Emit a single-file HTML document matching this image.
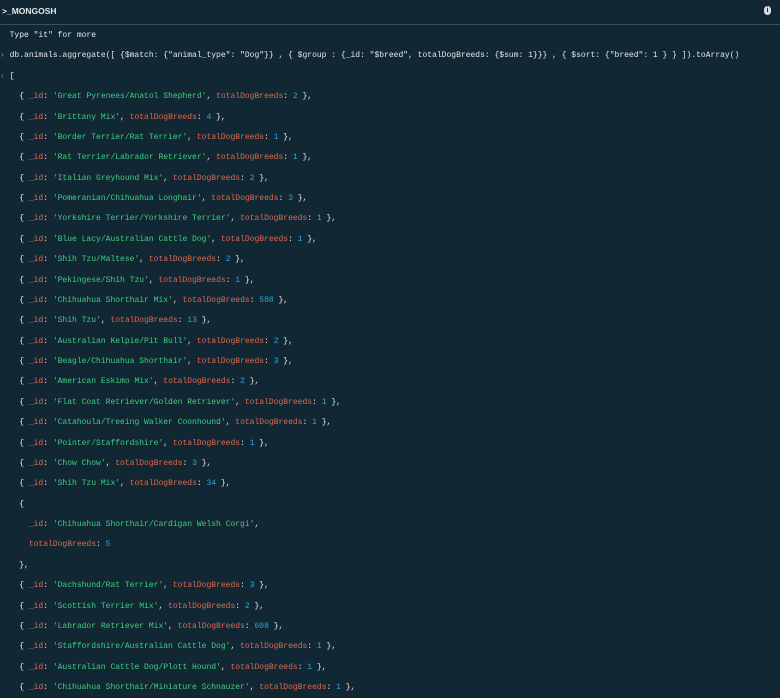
<!DOCTYPE html>
<html><head><meta charset="utf-8"><style>
body{margin:0;width:780px;height:693px;background:#112733;overflow:hidden;font-family:"Liberation Mono",monospace;font-size:8px;color:#e3e8ea}
.hd{position:absolute;left:0;top:0;width:780px;height:24px;border-bottom:1px solid #3a4d58;font-family:"Liberation Sans",sans-serif;font-size:8.5px;font-weight:bold;color:#e3e8ea}
.hd span{position:absolute;left:2px;top:6px}
.info{position:absolute;right:9px;top:6px;width:7px;height:9px;border-radius:4px;background:#d8dde0;color:#112733;font-size:7px;text-align:center;line-height:9px}
.c{position:absolute;left:0;top:26px;width:780px}
.l{height:20.38px;line-height:20.38px;white-space:pre}
.g{color:#3fcf80}.r{color:#e0674f}.b{color:#2fa6e6}.p{color:#8a979e}
</style></head><body>
<div class="hd"><span>&gt;_MONGOSH</span><div class="info">i</div></div>
<div class="c">
<div class="l">  Type "it" for more</div>
<div class="l"><span class="p">›</span> db.animals.aggregate([ {$match: {"animal_type": "Dog"}} , { $group : {_id: "$breed", totalDogBreeds: {$sum: 1}}} , { $sort: {"breed": 1 } } ]).toArray()</div>
<div class="l"><span class="p">‹</span> [</div>
<div class="l">    { <span class="r">_id</span>: <span class="g">'Great Pyrenees/Anatol Shepherd'</span>, <span class="r">totalDogBreeds</span>: <span class="b">2</span> },</div>
<div class="l">    { <span class="r">_id</span>: <span class="g">'Brittany Mix'</span>, <span class="r">totalDogBreeds</span>: <span class="b">4</span> },</div>
<div class="l">    { <span class="r">_id</span>: <span class="g">'Border Terrier/Rat Terrier'</span>, <span class="r">totalDogBreeds</span>: <span class="b">1</span> },</div>
<div class="l">    { <span class="r">_id</span>: <span class="g">'Rat Terrier/Labrador Retriever'</span>, <span class="r">totalDogBreeds</span>: <span class="b">1</span> },</div>
<div class="l">    { <span class="r">_id</span>: <span class="g">'Italian Greyhound Mix'</span>, <span class="r">totalDogBreeds</span>: <span class="b">2</span> },</div>
<div class="l">    { <span class="r">_id</span>: <span class="g">'Pomeranian/Chihuahua Longhair'</span>, <span class="r">totalDogBreeds</span>: <span class="b">3</span> },</div>
<div class="l">    { <span class="r">_id</span>: <span class="g">'Yorkshire Terrier/Yorkshire Terrier'</span>, <span class="r">totalDogBreeds</span>: <span class="b">1</span> },</div>
<div class="l">    { <span class="r">_id</span>: <span class="g">'Blue Lacy/Australian Cattle Dog'</span>, <span class="r">totalDogBreeds</span>: <span class="b">1</span> },</div>
<div class="l">    { <span class="r">_id</span>: <span class="g">'Shih Tzu/Maltese'</span>, <span class="r">totalDogBreeds</span>: <span class="b">2</span> },</div>
<div class="l">    { <span class="r">_id</span>: <span class="g">'Pekingese/Shih Tzu'</span>, <span class="r">totalDogBreeds</span>: <span class="b">1</span> },</div>
<div class="l">    { <span class="r">_id</span>: <span class="g">'Chihuahua Shorthair Mix'</span>, <span class="r">totalDogBreeds</span>: <span class="b">588</span> },</div>
<div class="l">    { <span class="r">_id</span>: <span class="g">'Shih Tzu'</span>, <span class="r">totalDogBreeds</span>: <span class="b">13</span> },</div>
<div class="l">    { <span class="r">_id</span>: <span class="g">'Australian Kelpie/Pit Bull'</span>, <span class="r">totalDogBreeds</span>: <span class="b">2</span> },</div>
<div class="l">    { <span class="r">_id</span>: <span class="g">'Beagle/Chihuahua Shorthair'</span>, <span class="r">totalDogBreeds</span>: <span class="b">3</span> },</div>
<div class="l">    { <span class="r">_id</span>: <span class="g">'American Eskimo Mix'</span>, <span class="r">totalDogBreeds</span>: <span class="b">2</span> },</div>
<div class="l">    { <span class="r">_id</span>: <span class="g">'Flat Coat Retriever/Golden Retriever'</span>, <span class="r">totalDogBreeds</span>: <span class="b">1</span> },</div>
<div class="l">    { <span class="r">_id</span>: <span class="g">'Catahoula/Treeing Walker Coonhound'</span>, <span class="r">totalDogBreeds</span>: <span class="b">1</span> },</div>
<div class="l">    { <span class="r">_id</span>: <span class="g">'Pointer/Staffordshire'</span>, <span class="r">totalDogBreeds</span>: <span class="b">1</span> },</div>
<div class="l">    { <span class="r">_id</span>: <span class="g">'Chow Chow'</span>, <span class="r">totalDogBreeds</span>: <span class="b">3</span> },</div>
<div class="l">    { <span class="r">_id</span>: <span class="g">'Shih Tzu Mix'</span>, <span class="r">totalDogBreeds</span>: <span class="b">34</span> },</div>
<div class="l">    {</div>
<div class="l">      <span class="r">_id</span>: <span class="g">'Chihuahua Shorthair/Cardigan Welsh Corgi'</span>,</div>
<div class="l">      <span class="r">totalDogBreeds</span>: <span class="b">5</span></div>
<div class="l">    },</div>
<div class="l">    { <span class="r">_id</span>: <span class="g">'Dachshund/Rat Terrier'</span>, <span class="r">totalDogBreeds</span>: <span class="b">3</span> },</div>
<div class="l">    { <span class="r">_id</span>: <span class="g">'Scottish Terrier Mix'</span>, <span class="r">totalDogBreeds</span>: <span class="b">2</span> },</div>
<div class="l">    { <span class="r">_id</span>: <span class="g">'Labrador Retriever Mix'</span>, <span class="r">totalDogBreeds</span>: <span class="b">608</span> },</div>
<div class="l">    { <span class="r">_id</span>: <span class="g">'Staffordshire/Australian Cattle Dog'</span>, <span class="r">totalDogBreeds</span>: <span class="b">1</span> },</div>
<div class="l">    { <span class="r">_id</span>: <span class="g">'Australian Cattle Dog/Plott Hound'</span>, <span class="r">totalDogBreeds</span>: <span class="b">1</span> },</div>
<div class="l">    { <span class="r">_id</span>: <span class="g">'Chihuahua Shorthair/Miniature Schnauzer'</span>, <span class="r">totalDogBreeds</span>: <span class="b">1</span> },</div>
</div>
</body></html>
